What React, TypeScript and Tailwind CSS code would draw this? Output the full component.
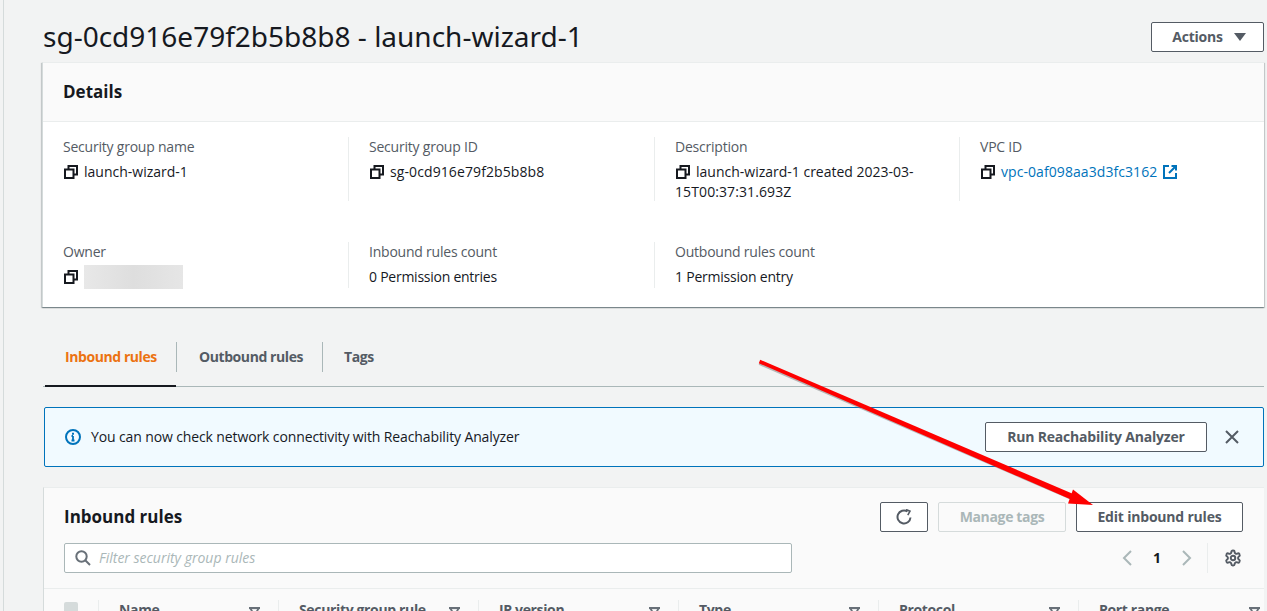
import React from 'react';

const CopyIcon = () => (
  <svg width="14" height="14" viewBox="0 0 14 14" fill="none" stroke="#16191f" strokeWidth="2" className="shrink-0">
    <rect x="1" y="4.5" width="8.5" height="8.5" />
    <path d="M4.5 4V1H13v8.5h-3" />
  </svg>
);

const ExternalIcon = () => (
  <svg width="14" height="14" viewBox="0 0 14 14" fill="none" stroke="#0073bb" strokeWidth="2" className="shrink-0">
    <path d="M6 1H1v12h12V8" />
    <path d="M8.5 1H13v4.5M13 1 6 8" />
  </svg>
);

const FilterIcon = () => (
  <svg width="11" height="10" viewBox="0 0 11 10" fill="none" stroke="#687078" strokeWidth="1.8" className="mt-1 shrink-0">
    <path d="M0 1h11" strokeWidth="2.2" />
    <path d="M1.5 1.5 5.5 8.5 9.5 1.5" />
  </svg>
);

const Field = ({ label, children }: { label: string; children: React.ReactNode }) => (
  <div>
    <div className="h-5 leading-5 tracking-[-0.22px] text-[#545b64]">{label}</div>
    <div className="mt-[5px] leading-5 text-[#16191f]">{children}</div>
  </div>
);

const Cell = ({ first, h, children }: { first?: boolean; h: string; children: React.ReactNode }) => (
  <div className={first ? h : `${h} border-l border-[#eaeded] pl-5`}>{children}</div>
);

const Copyable = ({ children }: { children: React.ReactNode }) => (
  <div className="flex items-center gap-[6px] pl-px">
    <CopyIcon />
    <span>{children}</span>
  </div>
);

const columns = [
  { name: 'Name', w: 'w-[180px]' },
  { name: 'Security group rule', w: 'w-[200px]' },
  { name: 'IP version', w: 'w-[200px]' },
  { name: 'Type', w: 'w-[200px]' },
  { name: 'Protocol', w: 'w-[200px]' },
  { name: 'Port range', w: 'w-[186px]' },
];

const btn = 'h-[30px] flex items-center justify-center rounded-[2px] border border-[#545b64] bg-white font-bold text-[#545b64] tracking-[-0.2px]';

export default function App() {
  return (
    <div className="relative h-[611px] w-[1267px] overflow-hidden bg-[#f2f3f3] font-['Open_Sans',sans-serif] text-sm">
      <div className="flex h-full">
        <div className="w-[4px] shrink-0 border-r border-[#d5dbdb]" />
        <div className="w-[1260px] shrink-0 pl-[39px]">
          {/* title */}
          <div className="flex h-[62px] items-start justify-between">
            <h1 className="mt-[14px] font-['Noto_Sans',sans-serif] text-[28px] leading-[44px] text-[#16191f]">sg-0cd916e79f2b5b8b8 - launch-wizard-1</h1>
            <button className={`${btn} mt-[22px] w-[113px] gap-[11px] pl-[3px]`}>
              Actions
              <svg width="12" height="8" viewBox="0 0 12 8"><path d="M0 0h12L6 8z" fill="#545b64" /></svg>
            </button>
          </div>

          {/* details */}
          <section className="-ml-px h-[245px] border-l border-t border-[#eaeded] border-l-[#d5dbdb] bg-white shadow-[0_1px_1px_0_rgba(0,28,36,0.3),1px_1px_1px_0_rgba(0,28,36,0.15),-1px_1px_1px_0_rgba(0,28,36,0.15)]">
            <div className="flex h-[59px] items-center border-b border-[#eaeded] bg-[#fafafa] pl-5 text-[#16191f]">
              <h2 className="mt-[-1px] text-[17px] font-bold leading-[22px]">Details</h2>
            </div>
            <div className="grid grid-cols-[285px_306px_305px_1fr] grid-rows-[64px_46px] gap-y-[41px] pl-5 pt-[15px]">
              <Cell first h="h-16"><Field label="Security group name"><Copyable>launch-wizard-1</Copyable></Field></Cell>
              <Cell h="h-16"><Field label="Security group ID"><div className="tracking-[0.1px]"><Copyable>sg-0cd916e79f2b5b8b8</Copyable></div></Field></Cell>
              <Cell h="h-16">
                <Field label="Description">
                  <div className="w-[245px]">
                    <Copyable>launch-wizard-1 created 2023-03-</Copyable>
                    <span className="tracking-[0.1px]">15T00:37:31.693Z</span>
                  </div>
                </Field>
              </Cell>
              <Cell h="h-16">
                <Field label="VPC ID">
                  <div className="flex items-center gap-[6px] pl-px tracking-[0.07px] text-[#0073bb]">
                    <CopyIcon />
                    <span>vpc-0af098aa3d3fc3162</span>
                    <ExternalIcon />
                  </div>
                </Field>
              </Cell>
              <Cell first h="h-[46px]">
                <Field label="Owner">
                  <div className="flex items-center gap-[6px] pl-px">
                    <CopyIcon />
                    <div className="-my-0.5 h-6 w-[99px] bg-linear-to-r from-[#e8e8e8] via-[#dedede] to-[#e6e6e6]" />
                  </div>
                </Field>
              </Cell>
              <Cell h="h-[46px]"><Field label="Inbound rules count"><span className="tracking-[-0.25px]">0 Permission entries</span></Field></Cell>
              <Cell h="h-[46px]"><Field label="Outbound rules count"><span className="tracking-[-0.22px]">1 Permission entry</span></Field></Cell>
            </div>
          </section>

          {/* tabs */}
          <div className="mt-[35px] flex h-[45px] border-b border-[#aab7b8] pl-[2px] font-bold tracking-[-0.42px] text-[#545b64]">
            <div className="h-[45px] w-[131px] border-b-2 border-[#16191f]">
              <div className="flex h-[30px] items-center pl-5 text-[#ec7211]">Inbound rules</div>
            </div>
            <div className="flex h-[30px] w-[146px] items-center border-l border-[#aab7b8] pl-[22px]">Outbound rules</div>
            <div className="flex h-[30px] items-center border-l border-[#aab7b8] pl-[21px]">Tags</div>
          </div>

          {/* alert */}
          <div className="ml-[1px] mt-5 flex h-[60px] w-[1220px] items-center rounded-[2px] border border-[#0073bb] bg-[#f1faff] pl-5">
            <svg width="16" height="16" viewBox="0 0 16 16" fill="none" className="shrink-0">
              <circle cx="8" cy="8" r="7" stroke="#0073bb" strokeWidth="2" />
              <path d="M8 7v4.5M6.5 11.5h3M6.5 7H8" stroke="#0073bb" strokeWidth="1.8" />
              <path d="M7 3.8h2v2H7z" fill="#0073bb" />
            </svg>
            <span className="ml-[10px] tracking-[-0.12px] text-[#16191f]">You can now check network connectivity with Reachability Analyzer</span>
            <button className={`${btn} ml-auto w-[222px]`}>Run Reachability Analyzer</button>
            <svg width="14" height="14" viewBox="0 0 14 14" fill="none" stroke="#545b64" strokeWidth="2" className="ml-[18px] mr-6 shrink-0">
              <path d="M1 1l12 12M13 1 1 13" />
            </svg>
          </div>

          {/* inbound rules table */}
          <section className="mt-5 border-l border-t border-[#eaeded] border-l-[#d5dbdb] bg-[#fafafa]">
            <div className="flex h-[101px] flex-col border-b border-[#eaeded] pl-5 pr-[21px]">
              <div className="mt-[14px] flex h-[30px] items-center">
                <h2 className="text-[17px] font-bold text-[#16191f]">Inbound rules</h2>
                <button className={`${btn} ml-auto w-[48px]`}>
                  <svg width="16" height="16" viewBox="0 0 16 16" fill="none" stroke="#545b64" strokeWidth="2">
                    <path d="M14.5 8.5A6.5 6.5 0 1 1 11.5 2.5" />
                    <path d="M10 .5 14 2.2 11.8 6.2" strokeWidth="1.6" />
                  </svg>
                </button>
                <button className="ml-[10px] h-[30px] w-[128px] rounded-[2px] border border-[#d5dbdb] bg-[#fafafa] font-bold tracking-[-0.35px] text-[#aab7b8]">Manage tags</button>
                <button className={`${btn} ml-[10px] w-[167px]`}>Edit inbound rules</button>
              </div>
              <div className="mt-[11px] flex h-[30px] items-center">
                <div className="flex h-[30px] w-[728px] items-center rounded-[2px] border border-[#aab7b8] bg-white pl-[10px]">
                  <svg width="16" height="16" viewBox="0 0 16 16" fill="none" stroke="#687078" strokeWidth="2" className="shrink-0">
                    <circle cx="6.5" cy="6.5" r="5.2" />
                    <path d="M10.5 10.5l4.5 4.5" />
                  </svg>
                  <input readOnly placeholder="Filter security group rules" className="ml-[8px] w-[400px] bg-transparent italic text-[#16191f] outline-none placeholder:text-[#aab7b8]" />
                </div>
                <div className="ml-auto flex h-[30px] items-center">
                  <svg width="10" height="16" viewBox="0 0 10 16" fill="none" stroke="#aab7b8" strokeWidth="2"><path d="M9 1 2 8l7 7" /></svg>
                  <span className="w-[50px] text-center font-bold text-[#16191f]">1</span>
                  <svg width="10" height="16" viewBox="0 0 10 16" fill="none" stroke="#aab7b8" strokeWidth="2"><path d="M1 1l7 7-7 7" /></svg>
                  <div className="ml-[15px] h-[30px] border-l border-[#eaeded]" />
                  <svg width="18" height="18" viewBox="0 0 24 24" fill="none" stroke="#545b64" strokeWidth="2.6" className="ml-[16px] mr-[1px]">
                    <path d="M12.2 2h-.4a2 2 0 0 0-2 2v.2a2 2 0 0 1-1 1.7l-.4.3a2 2 0 0 1-2 0l-.2-.1a2 2 0 0 0-2.7.7l-.2.4a2 2 0 0 0 .7 2.7l.2.1a2 2 0 0 1 1 1.7v.6a2 2 0 0 1-1 1.7l-.2.1a2 2 0 0 0-.7 2.7l.2.4a2 2 0 0 0 2.7.7l.2-.1a2 2 0 0 1 2 0l.4.3a2 2 0 0 1 1 1.7v.2a2 2 0 0 0 2 2h.4a2 2 0 0 0 2-2v-.2a2 2 0 0 1 1-1.7l.4-.3a2 2 0 0 1 2 0l.2.1a2 2 0 0 0 2.7-.7l.2-.4a2 2 0 0 0-.7-2.7l-.2-.1a2 2 0 0 1-1-1.7v-.6a2 2 0 0 1 1-1.7l.2-.1a2 2 0 0 0 .7-2.7l-.2-.4a2 2 0 0 0-2.7-.7l-.2.1a2 2 0 0 1-2 0l-.4-.3a2 2 0 0 1-1-1.7V4a2 2 0 0 0-2-2z" />
                    <circle cx="12" cy="12" r="3" />
                  </svg>
                </div>
              </div>
            </div>
            <div className="flex h-[30px] items-start pl-5 pt-[11px]">
              <div className="mt-[2px] h-[14px] w-[14px] shrink-0 rounded-[2px] bg-[#d5dbdb]" />
              <div className="ml-[20px] flex">
                {columns.map((c) => (
                  <div key={c.name} className={`${c.w} flex shrink-0 items-center justify-between border-l border-[#eaeded] pl-5 font-bold leading-5 tracking-[-0.35px] text-[#545b64] ${c.name === 'Port range' ? 'pr-[4px]' : 'pr-[18px]'}`}>
                    <span>{c.name}</span>
                    <FilterIcon />
                  </div>
                ))}
              </div>
            </div>
          </section>
        </div>
      </div>

      {/* red annotation arrow */}
      <svg width="1267" height="611" viewBox="0 0 1267 611" className="pointer-events-none absolute left-0 top-0">
        <path d="M759.5 361.5 1075 498" stroke="#7a7a7a" strokeOpacity="0.5" strokeWidth="4" transform="translate(0 1.5)" />
        <path d="M760.2 359.8 1076.2 495.2 1073.8 500.8 758.8 363.2z" fill="#fe0000" />
        <path d="M1093 505 1073 489.5 1068 503.5z" fill="#fe0000" />
      </svg>
    </div>
  );
}
